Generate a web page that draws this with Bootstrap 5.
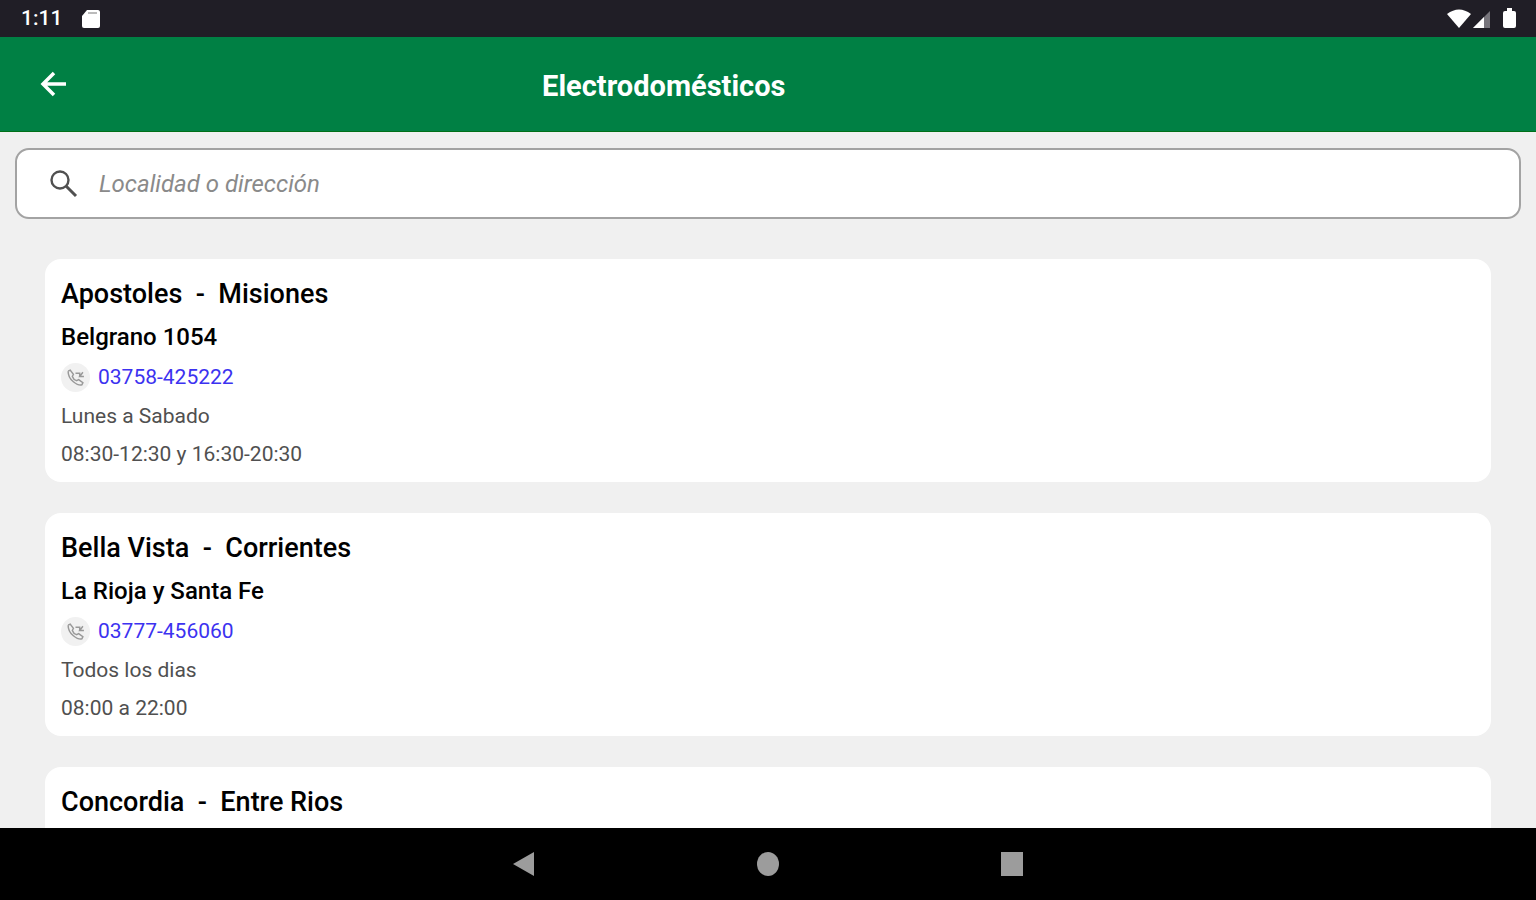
<!DOCTYPE html>
<html lang="es">
<head>
<meta charset="utf-8">
<meta name="viewport" content="width=device-width, initial-scale=1">
<title>Electrodomésticos</title>
<link href="https://cdn.jsdelivr.net/npm/bootstrap@5.3.0/dist/css/bootstrap.min.css" rel="stylesheet">
<style>
  body { font-family: Roboto, "Open Sans", sans-serif; background: #f0f0f0; color: #000; }
  svg { display: block; }
  .status-bar { background: #201e26; height: 37px; padding: 0 18px 0 21px; font-size: 21px; line-height: 37px; }
  .clock { gap: 19px; }
  .app-bar { background: #008044; height: 95px; padding-left: 38px; padding-right: 18%; border-bottom: 1px solid #007018; }
  .app-title { font-size: 29px; line-height: 36px; font-weight: 700; padding-top: 3px; }
  .icon-btn { border: 0; background: none; padding: 0; }
  .screen { min-height: 0; }
  .search-box { margin: 16px 15px 0; height: 71px; border: 2px solid #a3a3a3; border-radius: 14px; padding: 0 32px; gap: 20px; }
  .search-box input { font-size: 24px; line-height: 32px; font-style: italic; background: none; outline: 0; padding: 0; color: #333; }
  .search-box input::placeholder { color: #8a8a8a; opacity: 1; }
  .places { padding: 40px 45px 0; gap: 31px; }
  .place { border: 0; border-radius: 16px; padding: 13px 16px 9px; min-height: 223px; }
  .place h2 { font-size: 27px; line-height: 44px; font-weight: 500; margin: 0; }
  .place h3 { font-size: 24px; line-height: 42px; font-weight: 500; margin: 0; }
  .place p { font-size: 21px; line-height: 38px; margin: 0; color: #505050; }
  .place .phone-row { line-height: 39px; }
  .place a { color: #3c32f0; }
  .phone-dot { width: 29px; height: 29px; background: #f1f1f1; }
  .nav-keys { height: 72px; background: #000; gap: 220px; }
</style>
</head>
<body class="vh-100 d-flex flex-column overflow-hidden">
<div class="status-bar d-flex align-items-center text-white flex-shrink-0">
  <span class="clock fw-medium me-auto d-flex align-items-center">1:11
    <svg width="19" height="20" viewBox="0 0 19 20"><path d="M6 1h11q2 0 2 2v14q0 2-2 2H3q-2 0-2-2V7z" fill="#fff"/><path d="M7 4h9" stroke="#bbb" stroke-width="2"/></svg>
  </span>
  <svg width="72" height="24" viewBox="0 0 72 24"><path d="M1 7q12-9 24 0L13 21z" fill="#fff"/><path d="M27 21 44 4v17z" fill="#77757c"/><path d="M27 21 38 10v11z" fill="#fff"/><path d="M59 4h2V1h5v3h2q2 0 2 2v13q0 2-2 2h-9q-2 0-2-2V6q0-2 2-2" fill="#fff"/></svg>
</div>
<header class="app-bar d-flex align-items-center text-white flex-shrink-0">
  <button class="icon-btn" type="button" aria-label="Volver"><svg width="30" height="30" viewBox="0 0 30 30" fill="none" stroke="#fff" stroke-width="3.5"><path d="M28 15H5M16 4 5 15l11 11"/></svg></button>
  <h1 class="app-title flex-grow-1 text-center mb-0">Electrodomésticos</h1>
</header>
<main class="screen flex-grow-1 overflow-hidden">
  <label class="search-box d-flex align-items-center bg-white">
    <svg width="30" height="30" viewBox="0 0 30 30" fill="none" stroke="#505050" stroke-width="2.4"><circle cx="11" cy="11" r="8.5"/><path d="m17 17 10 10" stroke-width="3"/></svg>
    <input class="border-0 flex-grow-1" type="search" placeholder="Localidad o dirección" aria-label="Localidad o dirección">
  </label>
  <div class="places d-flex flex-column">
    <article class="place card">
      <h2>Apostoles&nbsp; -&nbsp; Misiones</h2>
      <h3>Belgrano 1054</h3>
      <p class="phone-row d-flex align-items-center gap-2"><span class="phone-dot rounded-circle d-flex align-items-center justify-content-center"><svg width="19" height="19" viewBox="0 0 18 18" fill="none" stroke="#999" stroke-width="1.4"><path d="m2 3 2-1 3 4-1 2q1 3 4 4l2-1 4 3-1 2q-3 1-8-3T2 3M9 5h4v3M16 4l-3 4h4"/></svg></span><a class="text-decoration-none" href="tel:03758425222">03758-425222</a></p>
      <p>Lunes a Sabado</p>
      <p>08:30-12:30 y 16:30-20:30</p>
    </article>
    <article class="place card">
      <h2>Bella Vista&nbsp; -&nbsp; Corrientes</h2>
      <h3>La Rioja y Santa Fe</h3>
      <p class="phone-row d-flex align-items-center gap-2"><span class="phone-dot rounded-circle d-flex align-items-center justify-content-center"><svg width="19" height="19" viewBox="0 0 18 18" fill="none" stroke="#999" stroke-width="1.4"><path d="m2 3 2-1 3 4-1 2q1 3 4 4l2-1 4 3-1 2q-3 1-8-3T2 3M9 5h4v3M16 4l-3 4h4"/></svg></span><a class="text-decoration-none" href="tel:03777456060">03777-456060</a></p>
      <p>Todos los dias</p>
      <p>08:00 a 22:00</p>
    </article>
    <article class="place card">
      <h2>Concordia&nbsp; -&nbsp; Entre Rios</h2>
    </article>
  </div>
</main>
<nav class="nav-keys d-flex align-items-center justify-content-center flex-shrink-0" aria-label="Sistema">
  <button class="icon-btn" type="button" aria-label="Atrás"><svg width="24" height="26" viewBox="0 0 24 26"><path d="M1 13 22 1v24z" fill="#9c9c9c"/></svg></button>
  <button class="icon-btn" type="button" aria-label="Inicio"><svg width="24" height="26" viewBox="0 0 24 26"><ellipse cx="12" cy="13" rx="11" ry="12" fill="#9c9c9c"/></svg></button>
  <button class="icon-btn" type="button" aria-label="Recientes"><svg width="24" height="26" viewBox="0 0 24 26"><path d="M1 1h22v24H1z" fill="#9c9c9c"/></svg></button>
</nav>
<script src="https://cdn.jsdelivr.net/npm/bootstrap@5.3.0/dist/js/bootstrap.bundle.min.js"></script>
</body>
</html>
